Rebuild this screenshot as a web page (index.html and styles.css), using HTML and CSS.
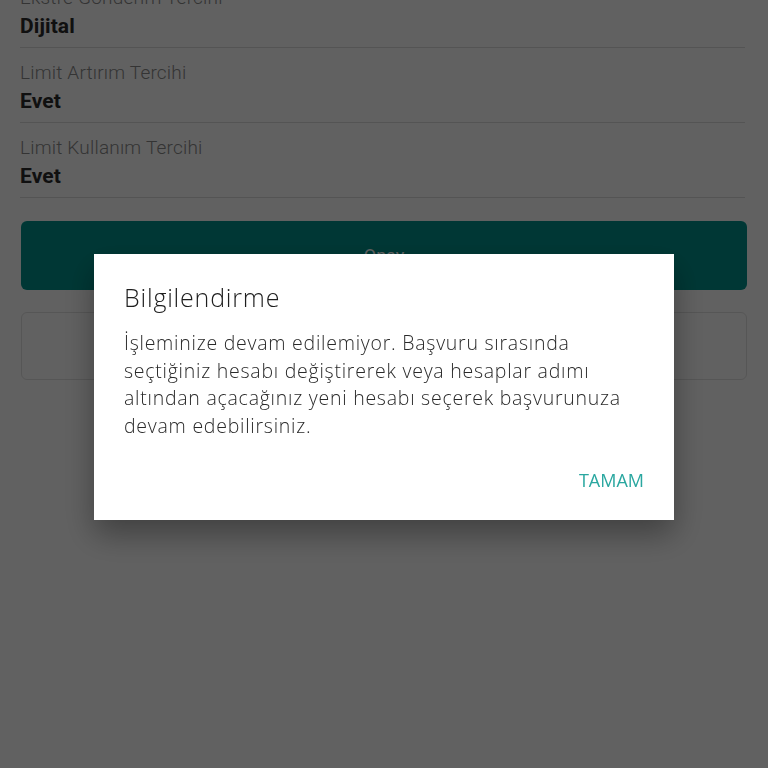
FILE: index.html
```html
<!DOCTYPE html>
<html lang="tr">
<head>
<meta charset="utf-8">
<title>Bilgilendirme</title>
<link rel="stylesheet" href="styles.css">
</head>
<body>
<main class="page">
  <div class="list">
    <div class="row">
      <div class="label">Ekstre Gönderim Tercihi</div>
      <div class="value">Dijital</div>
    </div>
    <div class="row">
      <div class="label">Limit Artırım Tercihi</div>
      <div class="value">Evet</div>
    </div>
    <div class="row">
      <div class="label">Limit Kullanım Tercihi</div>
      <div class="value">Evet</div>
    </div>
  </div>
  <button class="btn btn-primary">Onay</button>
  <button class="btn btn-secondary">Vazgeç</button>
</main>
<div class="overlay">
  <div class="dialog" role="dialog">
    <h2 class="dialog-title">Bilgilendirme</h2>
    <p class="dialog-text">İşleminize devam edilemiyor. Başvuru sırasında seçtiğiniz hesabı değiştirerek veya hesaplar adımı altından açacağınız yeni hesabı seçerek başvurunuza devam edebilirsiniz.</p>
    <div class="dialog-actions">
      <button class="dialog-btn">TAMAM</button>
    </div>
  </div>
</div>
</body>
</html>
```
FILE: styles.css
```css
* { box-sizing: border-box; }
html, body { margin: 0; padding: 0; }
body {
  width: 768px;
  height: 768px;
  overflow: hidden;
  background: #ffffff;
  font-family: "Roboto", "Liberation Sans", sans-serif;
}
.page {
  padding: 0 21px 0 20px;
}
.list {
  margin-top: -27px;
}
.row {
  padding: 14px 0 7px;
  border-bottom: 1px solid #dedede;
  margin-right: 2px;
}
.label {
  font-size: 19px;
  line-height: 22px;
  font-weight: 300;
  color: #8a8a8a;
  letter-spacing: 0.2px;
}
.value {
  margin-top: 3px;
  font-size: 21px;
  line-height: 28px;
  font-weight: 700;
  color: #2a2a2a;
  letter-spacing: 0.1px;
}
.btn {
  display: block;
  width: 726px;
  margin-left: 1px;
  font-family: "Roboto", "Liberation Sans", sans-serif;
  font-size: 18px;
  border-radius: 6px;
}
.btn-primary {
  margin-top: 23px;
  height: 69px;
  background: #00928c;
  color: #ffffff;
  border: none;
}
.btn-secondary {
  margin-top: 22px;
  height: 68px;
  background: #ffffff;
  color: #00928c;
  border: 1px solid #e2e2e2;
}
.overlay {
  position: fixed;
  inset: 0;
  background: rgba(0, 0, 0, 0.62);
  display: flex;
  justify-content: center;
  align-items: center;
}
.dialog {
  width: 580px;
  margin-top: 6px;
  background: #ffffff;
  padding: 28px 26px 30px 30px;
  box-shadow: 0 14px 30px rgba(0, 0, 0, 0.35);
  font-family: "Open Sans", "Lato", sans-serif;
}
.dialog-title {
  margin: 0;
  font-size: 25px;
  line-height: 30px;
  font-weight: 300;
  color: #1e1e1e;
  letter-spacing: 0.8px;
}
.dialog-text {
  margin: 17px 0 0;
  font-size: 19.5px;
  line-height: 27.5px;
  font-weight: 300;
  color: #2a2a2a;
  letter-spacing: 0.75px;
}
.dialog-actions {
  margin-top: 31px;
  padding-right: 4px;
  display: flex;
  justify-content: flex-end;
}
.dialog-btn {
  padding: 0;
  border: none;
  background: none;
  font-family: "Open Sans", "Lato", sans-serif;
  font-size: 18px;
  line-height: 20px;
  font-weight: 400;
  color: #2aa7a0;
}
```
